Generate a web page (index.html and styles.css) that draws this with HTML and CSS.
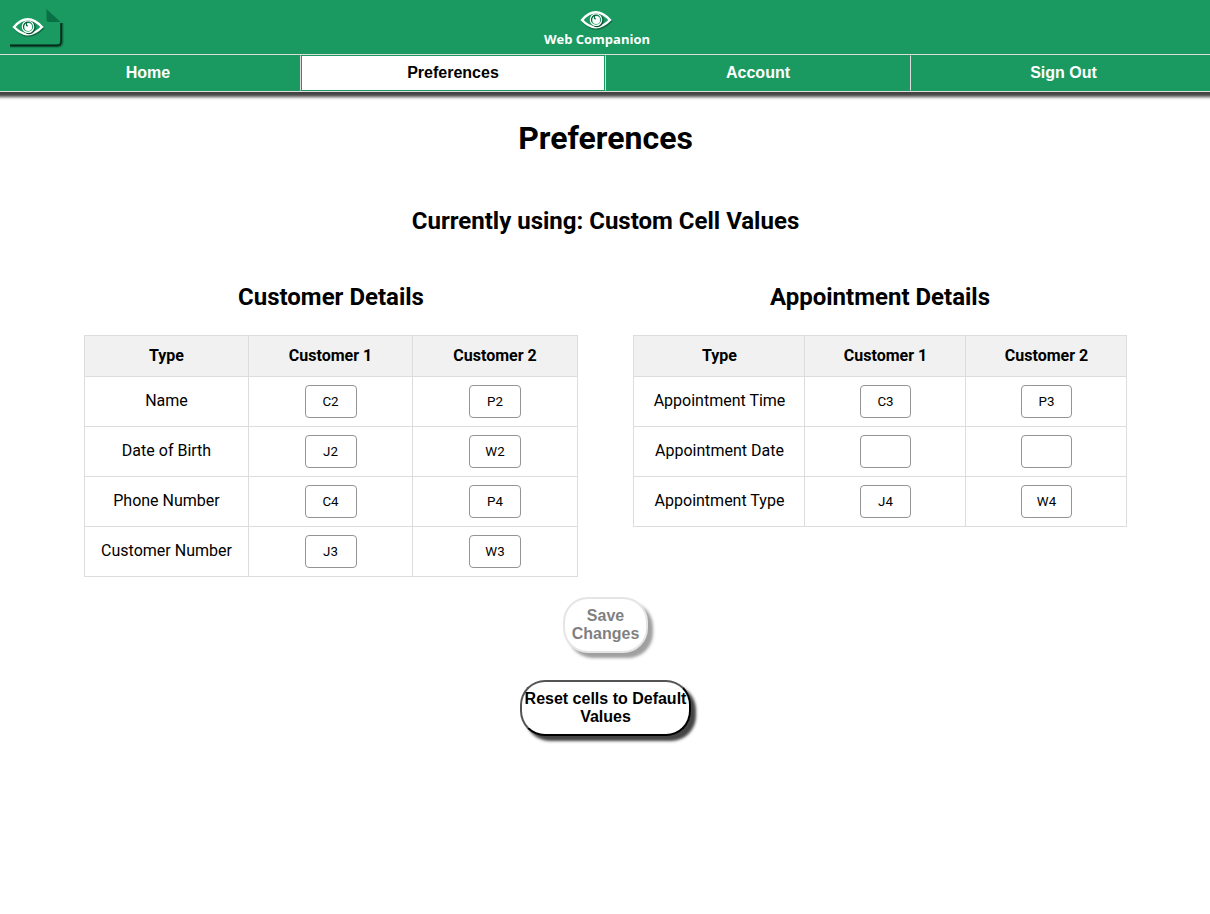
FILE: index.html
```html
<!DOCTYPE html>
<html lang="en">
<head>
<meta charset="utf-8">
<title>Web Companion - Preferences</title>
<link rel="stylesheet" href="styles.css">
</head>
<body>
<svg class="symbols" aria-hidden="true">
  <symbol id="eye" viewBox="0 0 34 22">
    <path d="M3 11.5Q16 -4 31 11.5Q16 26 3 11.5Z" fill="none" stroke="#0b5133" stroke-width="2.2" opacity=".65"/>
    <path d="M2 10Q15.500 -5.500 30 10Q15.500 24.500 2 10Z" fill="#1a9a60" stroke="#fff" stroke-width="2.4"/>
    <circle cx="17" cy="10.500" r="6" fill="none" stroke="#0b5133" stroke-width="1.300"/>
    <circle cx="16" cy="9.700" r="5.700" fill="none" stroke="#fff" stroke-width="1.200"/>
    <circle cx="16.200" cy="10" r="3.900" fill="#fff"/>
    <path d="M14.500 6L14.500 8.500L16 9" fill="none" stroke="#0b7042" stroke-width="1.200"/>
  </symbol>
</svg>
<header class="header">
  <svg class="sheet-logo" viewBox="0 0 70 54">
    <path d="M10 46H58Q62 46 62 42V23" fill="none" stroke="#07422a" stroke-width="3" opacity=".45"/>
    <path d="M10 45.500H57Q61.200 45.500 61.200 41V23" fill="none" stroke="#062b1b" stroke-width="1.800"/>
    <path d="M46.500 9L60.500 22H49Q46.500 22 46.500 19.500Z" fill="#087044"/>
    <use href="#eye" x="12" y="17" width="34" height="22"/>
  </svg>
  <div class="brand">
    <svg class="brand-eye" viewBox="0 0 34 22"><use href="#eye" width="34" height="22"/></svg>
    <span class="brand-name">Web Companion</span>
  </div>
</header>
<nav class="nav">
  <a class="nav-item">Home</a>
  <a class="nav-item active">Preferences</a>
  <a class="nav-item">Account</a>
  <a class="nav-item">Sign Out</a>
</nav>
<main class="main">
  <h1 class="title">Preferences</h1>
  <h2 class="status">Currently using: Custom Cell Values</h2>
  <div class="details">
    <section class="group">
      <h2 class="group-title">Customer Details</h2>
      <table class="cells customer">
        <colgroup><col class="type-col"><col class="value-col"><col></colgroup>
        <tr><th>Type</th><th>Customer 1</th><th>Customer 2</th></tr>
        <tr><td>Name</td><td><input value="C2"></td><td><input value="P2"></td></tr>
        <tr><td>Date of Birth</td><td><input value="J2"></td><td><input value="W2"></td></tr>
        <tr><td>Phone Number</td><td><input value="C4"></td><td><input value="P4"></td></tr>
        <tr><td>Customer Number</td><td><input value="J3"></td><td><input value="W3"></td></tr>
      </table>
    </section>
    <section class="group">
      <h2 class="group-title">Appointment Details</h2>
      <table class="cells appointment">
        <colgroup><col class="type-col"><col class="value-col"><col></colgroup>
        <tr><th>Type</th><th>Customer 1</th><th>Customer 2</th></tr>
        <tr><td>Appointment Time</td><td><input value="C3"></td><td><input value="P3"></td></tr>
        <tr><td>Appointment Date</td><td><input value=""></td><td><input value=""></td></tr>
        <tr><td>Appointment Type</td><td><input value="J4"></td><td><input value="W4"></td></tr>
      </table>
    </section>
  </div>
  <div class="actions">
    <button class="button save" disabled>Save Changes</button>
    <button class="button reset">Reset cells to Default Values</button>
  </div>
</main>
</body>
</html>
```
FILE: styles.css
```css
* { box-sizing: border-box; }
body {
  margin: 0;
  padding-bottom: 20px;
  background: #fff;
  color: #000;
  font: 16px/18px Roboto, sans-serif;
  overflow-x: hidden;
}
.symbols { display: none; }
.header {
  display: grid;
  grid-template-columns: 70px 1fr 86px;
  height: 54px;
  background: #1a9a60;
}
.sheet-logo { width: 70px; height: 54px; }
.brand {
  display: flex;
  flex-direction: column;
  align-items: center;
  padding-top: 10px;
}
.brand-eye { width: 34px; height: 22px; margin-bottom: -2px; }
.brand-name {
  color: #fff;
  font: bold 13px/18px "Open Sans", sans-serif;
}
.nav {
  display: grid;
  grid-template-columns: repeat(4, 305px);
  width: 1220px;
  height: 38px;
  margin-left: -5px;
  border: solid #ddd;
  border-width: 1px 0;
  background: #1a9a60;
  box-shadow: 0 5px 3px #444;
}
.nav-item {
  padding: 8px 0 0 1px;
  color: #fff;
  font: bold 16px/18px "Liberation Sans", sans-serif;
  text-align: center;
  border: 1px solid #1a9a60;
  border-left-color: #ddd;
}
.nav-item.active {
  color: #000;
  background: #fff;
  box-shadow: inset 1px 0 #1a9a60;
}
.nav-item:last-child { padding-left: 2px; }
.title {
  margin: 27px 0 0;
  padding-left: 1px;
  font-size: 32px;
  line-height: 38px;
  text-align: center;
}
.status, .group-title {
  margin: 0;
  font-size: 24px;
  line-height: 28px;
  text-align: center;
}
.status { margin-top: 50px; padding-left: 1px; }
.details {
  display: grid;
  grid-template-columns: 494px 494px;
  gap: 55px;
  margin: 48px 0 0 84px;
  align-items: start;
}
.cells {
  width: 494px;
  margin-top: 24px;
  table-layout: fixed;
  border-collapse: collapse;
}
.customer .type-col, .customer .value-col { width: 164px; }
.appointment .type-col { width: 171px; }
.appointment .value-col { width: 161px; }
.cells th, .cells td {
  padding: 0;
  border: 1px solid #ddd;
  text-align: center;
}
.cells th { height: 41px; background: #f1f1f1; }
.appointment th { padding-left: 1px; }
.cells td { height: 50px; vertical-align: middle; }
.cells td:first-child { padding-bottom: 2px; }
.appointment td:first-child { padding-left: 1px; }
.cells input {
  display: block;
  width: 52px;
  height: 33px;
  margin: 0 auto;
  padding: 0;
  border: 1px solid #949494;
  border-radius: 4px;
  font: 13.333px Roboto, sans-serif;
  text-align: center;
}
.appointment input { width: 51px; padding-left: 1px; }
.actions {
  display: flex;
  flex-direction: column;
  align-items: center;
  gap: 27px;
  margin-top: 20px;
  padding-left: 1px;
}
.button {
  height: 56px;
  padding: 0;
  border: 2px outset #000;
  border-radius: 25px;
  background: #fff;
  color: #000;
  font: bold 16px/18px "Liberation Sans", sans-serif;
  box-shadow: 5px 5px 3px #444;
}
.save { width: 85px; opacity: .5; border: 2px solid #ccc; }
.reset { width: 171px; }
```
